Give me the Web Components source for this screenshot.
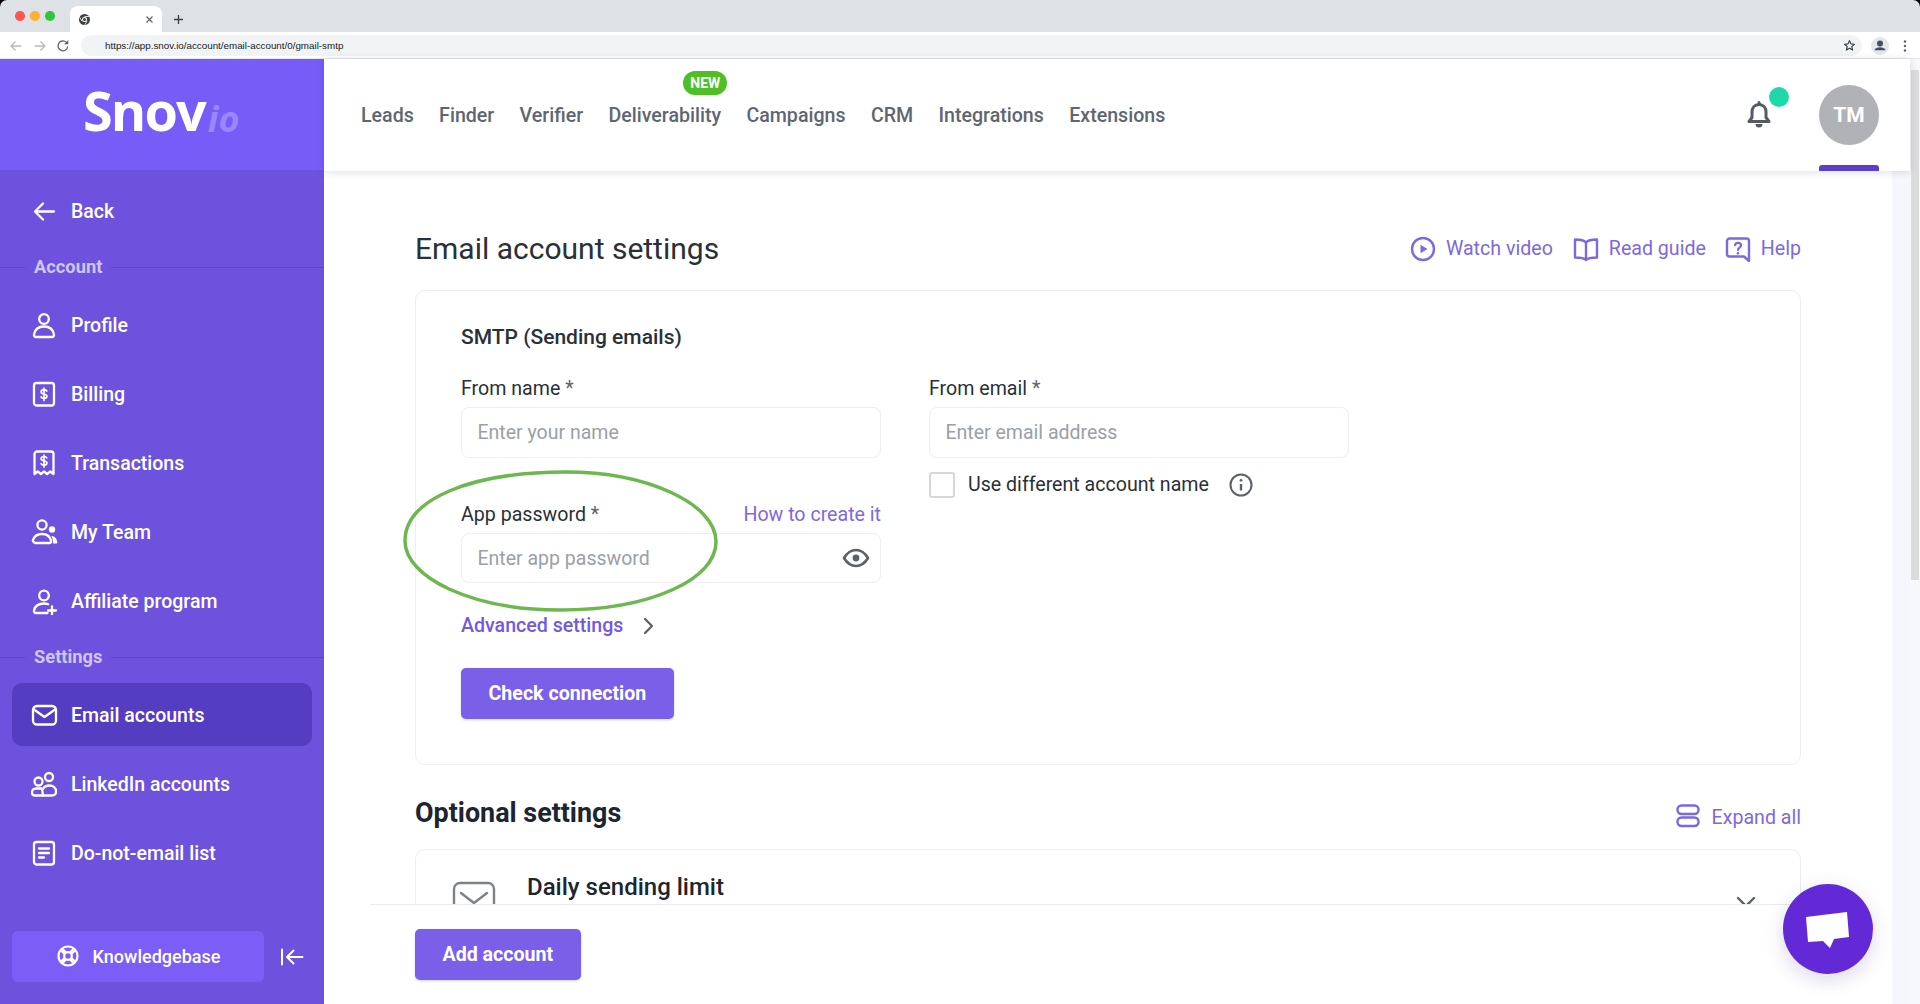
<!DOCTYPE html>
<html lang="en">
<head>
<meta charset="utf-8">
<title>Snov.io Email account settings</title>
<style>
html,body{margin:0;padding:0;height:1004px;overflow:hidden;background:#000;font-family:Roboto,"Liberation Sans",sans-serif;}
#page{display:flex;flex-direction:column;height:1004px;position:relative;}
#app{display:flex;flex:1;min-height:0;background:#fff;}
#col{flex:1;display:flex;flex-direction:column;min-width:0;}
#below{flex:1;display:flex;min-height:0;}
#main{width:1568px;display:flex;flex-direction:column;min-height:0;background:#fff;}
#gutter{flex:1;background:#f6f7fc;}
#scroll{flex:1;min-height:0;overflow:hidden;}
</style>
</head>
<body>
<div id="page">
  <browser-bar url="https://app.snov.io/account/email-account/0/gmail-smtp"></browser-bar>
  <div id="app">
    <snov-sidebar>
      <side-item icon="back">Back</side-item>
      <side-label>Account</side-label>
      <side-item icon="profile">Profile</side-item>
      <side-item icon="billing">Billing</side-item>
      <side-item icon="receipt">Transactions</side-item>
      <side-item icon="team">My Team</side-item>
      <side-item icon="affiliate">Affiliate program</side-item>
      <side-label>Settings</side-label>
      <side-item icon="mail" active>Email accounts</side-item>
      <side-item icon="linked">LinkedIn accounts</side-item>
      <side-item icon="doc">Do-not-email list</side-item>
    </snov-sidebar>
    <div id="col">
      <top-nav></top-nav>
      <div id="below">
        <div id="main">
          <div id="scroll">
            <settings-page></settings-page>
          </div>
          <page-footer></page-footer>
        </div>
        <div id="gutter"></div>
      </div>
    </div>
    <fake-scrollbar></fake-scrollbar>
  </div>
  <chat-bubble></chat-bubble>
</div>

<script>
const ICONS = {
  back:`<path d="M23 13.500H5M12 5.500l-8 8 8 8"/>`,
  profile:`<circle cx="13" cy="7" r="4.800"/><path d="M5 25h16a2 2 0 0 0 2-2.500C22 17.200 18 14.500 13 14.500S4 17.200 3 22.500A2 2 0 0 0 5 25z"/>`,
  billing:`<rect x="3" y="2" width="20" height="22.500" rx="2.500"/><path d="M15.800 10c-.5-.9-1.600-1.300-2.800-1.300-1.700 0-2.900.8-2.900 2.200 0 2.900 5.800 1.400 5.800 4.300 0 1.400-1.300 2.200-2.900 2.200-1.400 0-2.500-.5-3-1.500M13 7v12.500" stroke-width="1.700"/>`,
  receipt:`<path d="M3.500 24V4a2.500 2.500 0 0 1 2.500-2.500h14A2.500 2.500 0 0 1 22.500 4v20l-3.200-2.500-3.200 2.500-3.100-2.500-3.100 2.500-3.200-2.500z"/><path d="M15.800 7.800c-.5-.9-1.600-1.300-2.800-1.300-1.700 0-2.900.8-2.900 2.200 0 2.900 5.800 1.400 5.800 4.300 0 1.400-1.300 2.200-2.900 2.200-1.400 0-2.500-.5-3-1.500M13 5v12" stroke-width="1.700"/>`,
  team:`<circle cx="11" cy="6" r="4.600"/><path d="M4 24h14.500c1.500 0 2-1.200 1.500-2.500-1-4-4.500-6.500-9-6.500-4.500 0-8 2.500-9.200 6.500C2.300 22.800 2.800 24 4 24z"/><circle cx="21" cy="10.500" r="3.200" fill="currentColor" stroke="none"/><path d="M20.500 17c3 0 5.300 2.500 5.800 6.200 0 1-.5 1.300-1.300 1.300H22c.2-3-.5-5.500-1.500-7.500z" fill="currentColor" stroke="none"/>`,
  affiliate:`<circle cx="13" cy="7.500" r="4.800"/><path d="M16.500 25H5a2 2 0 0 1-2-2.500C4 18 8 15.500 13 15.500c1.500 0 2.900.2 4.200.7"/><path d="M21 18.500v8M17 22.500h8"/>`,
  mail:`<rect x="2" y="4" width="23" height="18.500" rx="4"/><path d="M3 7.500l10.500 7.500L24 7.500"/>`,
  linked:`<circle cx="7.500" cy="10.500" r="4"/><circle cx="18" cy="6" r="4"/><path d="M4 24.500h7.500c.5-3 .2-5-1-7H5c-3 0-4 2-4 4 0 2 1.300 3 3 3z"/><path d="M11.500 24.500H21c2.500 0 4-1.500 4-4 0-3.500-2.800-6-6.500-6-3 0-5.500 1.500-6.500 3.500"/>`,
  doc:`<rect x="3" y="2" width="20" height="22.500" rx="2.500"/><path d="M8 8.500h10M8 13h10M8 17.500h5"/>`
};

class AppIcon extends HTMLElement{
  connectedCallback(){
    const n=this.getAttribute('name');
    const s=this.attachShadow({mode:'open'});
    s.innerHTML=`<style>:host{display:inline-flex;width:27px;height:27px;flex:none}svg{width:100%;height:100%;display:block;fill:none;stroke:currentColor;stroke-width:2.300;stroke-linecap:round;stroke-linejoin:round}</style><svg viewBox="0 0 27 27">${ICONS[n]||''}</svg>`;
  }
}
customElements.define('app-icon',AppIcon);

class BrowserBar extends HTMLElement{
  connectedCallback(){
    const s=this.attachShadow({mode:'open'});
    s.innerHTML=`<style>
:host{display:block;background:#000;flex:none}
.strip{height:32px;background:#dee1e6;border-radius:7px 7px 0 0;display:flex;align-items:flex-end;padding-left:15px;box-sizing:border-box;overflow:hidden}
.lights{display:flex;gap:5.500px;align-self:flex-start;margin-top:11px;width:55px}
.lights i{width:9.500px;height:9.500px;border-radius:50%;display:block}
.tab{width:92px;height:26px;background:#fff;border-radius:8px 8px 0 0;display:flex;align-items:center;justify-content:space-between;padding:0 8px 0 8px;box-sizing:border-box}
.plus{margin:0 0 7px 11px}
.bar{height:26px;background:#fff;border-bottom:1px solid #e3e5e8;display:flex;align-items:center;box-sizing:content-box;padding-top:0}
.navs{display:flex;align-items:center;gap:8px;padding:1px 0 0 8px;width:81px;box-sizing:border-box}
.pill{width:1781px;height:21px;margin-top:1px;border-radius:11px;background:#f1f3f4;display:flex;align-items:center;justify-content:space-between;padding:0 6px 0 24px;box-sizing:border-box;font:9.800px "Liberation Sans",Arial,sans-serif;color:#202124;flex:none}
.right{display:flex;align-items:center;gap:14px;margin:1px 0 0 9px}
svg{display:block}
</style>
<div class="strip">
  <div class="lights"><i style="background:#fc5650"></i><i style="background:#fdb12c"></i><i style="background:#2ec53f"></i></div>
  <div class="tab">
    <svg width="13" height="13" viewBox="0 0 13 13"><circle cx="6.500" cy="6.500" r="5.500" fill="#3c4043"/><circle cx="6.500" cy="6.500" r="2.500" fill="#fff"/><circle cx="6.500" cy="6.500" r="1.500" fill="#3c4043"/><path d="M6.500 3.500H12M3.900 8L1.500 4M9 8l-2.500 4.500" stroke="#fff" stroke-width=".8"/></svg>
    <svg width="9" height="9" viewBox="0 0 9 9"><path d="M1.500 1.500l6 6M7.500 1.500l-6 6" stroke="#5f6368" stroke-width="1.200"/></svg>
  </div>
  <svg class="plus" width="11" height="11" viewBox="0 0 11 11"><path d="M5.500 1v9M1 5.500h9" stroke="#3c4043" stroke-width="1.300"/></svg>
</div>
<div class="bar">
  <div class="navs">
    <svg width="16" height="16" viewBox="0 0 16 16"><path d="M13.500 8H3M7.500 3.500L3 8l4.500 4.500" fill="none" stroke="#b7babd" stroke-width="1.300"/></svg>
    <svg width="16" height="16" viewBox="0 0 16 16"><path d="M2.500 8H13M8.500 3.500L13 8l-4.500 4.500" fill="none" stroke="#b7babd" stroke-width="1.300"/></svg>
    <svg width="14" height="14" viewBox="0 0 14 14"><path d="M11.800 7.500A4.900 4.900 0 1 1 10.400 3.400" fill="none" stroke="#5f6368" stroke-width="1.300"/><path d="M12.300 1v4.200H8.100z" fill="#5f6368"/></svg>
  </div>
  <div class="pill"><span>${this.getAttribute('url')}</span>
    <svg width="13" height="13" viewBox="0 0 24 24"><path d="M12 3l2.700 6 6.300.7-4.700 4.300 1.300 6.500L12 17.200l-5.600 3.300L7.700 14 3 9.700 9.300 9z" fill="none" stroke="#3c4043" stroke-width="2.200" stroke-linejoin="round"/></svg>
  </div>
  <div class="right">
    <svg width="18" height="18" viewBox="0 0 18 18"><circle cx="9" cy="9" r="9" fill="#e4e6e9"/><circle cx="9" cy="6.600" r="3" fill="#44505f"/><path d="M3.500 13.200c.8-2.200 3-3 5.500-3s4.700.8 5.500 3z" fill="#44505f"/></svg>
    <svg width="4" height="12" viewBox="0 0 4 12"><circle cx="2" cy="1.500" r="1.200" fill="#5f6368"/><circle cx="2" cy="6" r="1.200" fill="#5f6368"/><circle cx="2" cy="10.500" r="1.200" fill="#5f6368"/></svg>
  </div>
</div>`;
  }
}
customElements.define('browser-bar',BrowserBar);

class SnovSidebar extends HTMLElement{
  connectedCallback(){
    const s=this.attachShadow({mode:'open'});
    s.innerHTML=`<style>
:host{display:flex;flex-direction:column;width:324px;flex:none;background:#6c52dc;color:#fff;font-family:Roboto,sans-serif}
.logo{height:111px;background:#785cf8;display:flex;align-items:flex-start;padding-left:83px;box-sizing:border-box;flex:none;overflow:hidden}
.logo b{font:700 54px/103px "Open Sans",sans-serif;letter-spacing:-1.900px}
.logo i{font:italic 700 36px/103px "Open Sans",sans-serif;color:#9a87fb;margin:8px 0 0 3px}
nav{padding-top:6px;display:flex;flex-direction:column}
.foot{margin-top:auto;display:flex;align-items:center;padding:0 0 22px 12px;gap:16px}
.kb{width:252px;height:51px;background:#7a5ef5;border-radius:6px;display:flex;align-items:center;justify-content:center;gap:13px;font-weight:500;font-size:18px;box-sizing:border-box;padding-bottom:1px}
svg{display:block}
</style>
<div class="logo"><b>Snov</b><i>io</i></div>
<nav><slot></slot></nav>
<div class="foot">
  <div class="kb">
    <svg width="24" height="24" viewBox="0 0 24 24" fill="none" stroke="#fff"><circle cx="12" cy="12" r="9.500" stroke-width="2.200"/><circle cx="12" cy="12" r="3.800" stroke-width="2.200"/><path d="M5 5l4.300 4.300M19 5l-4.300 4.300M5 19l4.300-4.300M19 19l-4.300-4.300" stroke-width="4.200"/></svg>
    <span>Knowledgebase</span>
  </div>
  <svg width="24" height="20" viewBox="0 0 24 20" fill="none" stroke="#fff" stroke-width="2" stroke-linecap="round" stroke-linejoin="round"><path d="M2 2.500v15M22.500 10H7.500M13.500 3.500L7 10l6.500 6.500"/></svg>
</div>`;
  }
}
customElements.define('snov-sidebar',SnovSidebar);

class SideItem extends HTMLElement{
  connectedCallback(){
    const s=this.attachShadow({mode:'open'});
    const icon=this.getAttribute('icon');
    s.innerHTML=`<style>
:host{display:block;height:63px;margin:3px 12px;border-radius:10px;font-size:19.500px;font-weight:500;color:#fff}
:host([active]){background:#553dc2}
.r{display:flex;align-items:center;height:100%;padding:2px 0 0 19px;gap:13px;box-sizing:border-box}
</style><div class="r"><app-icon name="${icon}"></app-icon><slot></slot></div>`;
  }
}
customElements.define('side-item',SideItem);

class SideLabel extends HTMLElement{
  connectedCallback(){
    const s=this.attachShadow({mode:'open'});
    s.innerHTML=`<style>
:host{display:flex;align-items:center;height:45px;color:#cfc6f6;font-size:18.300px;font-weight:700}
i{height:1px;background:#5d45cb;display:block}
i.a{width:25px}i.b{flex:1}
span{padding:0 9px 2px}
</style><i class="a"></i><span><slot></slot></span><i class="b"></i>`;
  }
}
customElements.define('side-label',SideLabel);

class TopNav extends HTMLElement{
  connectedCallback(){
    const s=this.attachShadow({mode:'open'});
    const items=['Leads','Finder','Verifier','Deliverability','Campaigns','CRM','Integrations','Extensions'];
    s.innerHTML=`<style>
:host{display:flex;align-items:center;height:112px;flex:none;background:#fff;box-shadow:0 1px 8px rgba(40,50,70,.16);position:relative;z-index:2;padding:0 31px 0 37px;font-family:Roboto,sans-serif;box-sizing:border-box}
ul{list-style:none;margin:0;padding:0;display:flex;gap:25.350px;font-size:19.600px;font-weight:500;color:#5e6672}
li{position:relative}
.new{position:absolute;left:calc(50% + 40.500px);top:-33px;transform:translateX(-50%);width:44px;height:24px;border-radius:12px;background:#4fbf26;color:#fff;font-size:14px;font-weight:700;display:flex;align-items:center;justify-content:center}
.right{margin-left:auto;display:flex;align-items:center;height:100%;position:relative}
.bell{position:relative;margin-right:48px;width:24px;height:28px}
.dot{position:absolute;left:22px;top:-14px;width:20px;height:20px;border-radius:50%;background:#1fd8a8}
.ava{width:60px;height:60px;border-radius:50%;background:#b0b2b6;color:#fff;font-size:21px;font-weight:700;display:flex;align-items:center;justify-content:center}
.under{position:absolute;right:0;bottom:0;width:60px;height:6px;background:#5a3fc9;border-radius:3px 3px 0 0}
svg{display:block}
</style>
<ul>${items.map(t=>`<li>${t==='Deliverability'?'<span class="new">NEW</span>':''}${t}</li>`).join('')}</ul>
<div class="right">
  <div class="bell">
    <svg width="24" height="28" viewBox="0 0 24 28" fill="none" stroke="#555b63" stroke-width="3" stroke-linejoin="round"><path d="M12 3.500c-4.500 0-7 3.300-7 7.500v5.500l-3 4h20l-3-4V11c0-4.200-2.500-7.500-7-7.500z"/><path d="M12 1.500v2" stroke-linecap="round"/><path d="M8.500 23a3.500 3.500 0 0 0 7 0z" fill="#555b63" stroke="none"/></svg>
    <span class="dot"></span>
  </div>
  <div class="ava">TM</div>
  <div class="under"></div>
</div>`;
  }
}
customElements.define('top-nav',TopNav);

class TextField extends HTMLElement{
  connectedCallback(){
    const s=this.attachShadow({mode:'open'});
    s.innerHTML=`<style>
:host{display:flex;align-items:center;justify-content:space-between;height:51px;border:1.500px solid #eceef1;border-radius:8px;padding:0 10px 0 15.500px;box-sizing:border-box;color:#9aa0a8;font-size:19.500px;background:#fff}
:host(.pwf){padding-top:1.500px}
</style><span>${this.getAttribute('placeholder')}</span><slot></slot>`;
  }
}
customElements.define('text-field',TextField);

class LinkIcon extends HTMLElement{
  connectedCallback(){
    const s=this.attachShadow({mode:'open'});
    const paths={
      play:'<circle cx="13" cy="13" r="11" stroke-width="2.400"/><path d="M10.500 8.800l7 4.200-7 4.200z" fill="currentColor" stroke="none"/>',
      book:'<path d="M13 6.500C11.500 4.500 9 3.500 2 3.500v18c7 0 9.500.7 11 2.500 1.500-1.800 4-2.500 11-2.500v-18c-7 0-9.500 1-11 3zM13 6.500V24" stroke-width="2.400"/>',
      help:'<path d="M4.500 2.500h17a2.500 2.500 0 0 1 2.500 2.500v20l-5-4.500H4.500A2.500 2.500 0 0 1 2 18V5a2.500 2.500 0 0 1 2.500-2.500z" stroke-width="2.400"/><path d="M10 9.200c.3-1.500 1.500-2.300 3-2.300 1.700 0 3 1 3 2.500 0 2.200-3 2.300-3 4.600" stroke-width="2.200"/><circle cx="13" cy="17.200" r="1.300" fill="currentColor" stroke="none"/>',
      expand:'<rect x="1.500" y="1.500" width="21" height="8.500" rx="4" stroke-width="2.400"/><rect x="1.500" y="13.500" width="21" height="8.500" rx="4" stroke-width="2.400"/>'
    };
    const w=this.getAttribute('icon')==='expand'?24:26;
    s.innerHTML=`<style>
:host{display:inline-flex;align-items:center;color:#7e68de;font-size:19.600px;gap:var(--g,10px)}
svg{display:block;fill:none;stroke:currentColor;stroke-linecap:round;stroke-linejoin:round;flex:none}
</style><svg width="${w}" height="26" viewBox="0 0 ${w} 26">${paths[this.getAttribute('icon')]}</svg><slot></slot>`;
  }
}
customElements.define('link-icon',LinkIcon);

class SettingsPage extends HTMLElement{
  connectedCallback(){
    const s=this.attachShadow({mode:'open'});
    s.innerHTML=`<style>
:host{display:block;padding:60px 91px 0;font-family:Roboto,sans-serif;color:#2a3038;font-size:19.600px}
.head{display:flex;justify-content:space-between;align-items:center;height:35px}
h1{font-size:30px;font-weight:400;margin:0;color:#2a3038}
.links{display:flex;gap:20px;align-items:center}
.links link-icon:last-child{margin-left:-1px}
.card{border:1.500px solid #eceef1;border-radius:10px;box-sizing:border-box;background:#fff}
.smtp{margin-top:24px;height:475px;padding:33.500px 45px 0;position:relative}
h2{font-size:21px;font-weight:500;margin:0;line-height:24px;color:#2a3038}
.grid{display:grid;grid-template-columns:420px 420px;column-gap:48px;margin-top:27px}
.col{display:flex;flex-direction:column}
.lab{display:flex;justify-content:space-between;height:24px;line-height:24px;margin-bottom:7px;padding-top:1px;box-sizing:border-box}
.lab span.s{color:#5c636b}
.pw{margin-top:44px}
.pwf{height:50px}
.adv{display:flex;align-items:center;margin-top:31px;height:24px;color:#7259e0;font-weight:500;gap:19px}
.btn{margin-top:30px;align-self:flex-start}
.chk{display:flex;align-items:center;margin-top:14px;height:26px}
.box{width:26px;height:26px;border:2px solid #d5d7da;border-radius:3px;box-sizing:border-box;margin-right:13px}
.chk svg{margin-left:20px}
.ell{position:absolute;top:178px;left:-15px;pointer-events:none}
.opt{display:flex;justify-content:space-between;align-items:center;margin-top:32px;height:32px}
.opt h3{font-size:26.900px;font-weight:700;margin:0;color:#1c2530}
.opt link-icon{--g:12px;position:relative;top:4px}
.daily{margin-top:20px;height:120px;display:flex;padding:23px 6px 0 36px;align-items:flex-start}
.daily .t{font-size:24px;font-weight:500;line-height:29px;color:#1c2530;margin-left:31px;flex:1}
.daily .ic{margin-top:7.500px}
.daily .cv{margin-top:23px;margin-right:38px}
a{color:#7e68de;text-decoration:none}
svg{display:block}
</style>
<div class="head"><h1>Email account settings</h1>
  <div class="links"><link-icon icon="play">Watch video</link-icon><link-icon icon="book">Read guide</link-icon><link-icon icon="help">Help</link-icon></div>
</div>
<div class="card smtp">
  <h2>SMTP (Sending emails)</h2>
  <div class="grid">
    <div class="col">
      <div class="lab"><span>From name <span class="s">*</span></span></div>
      <text-field placeholder="Enter your name"></text-field>
      <div class="lab pw"><span>App password <span class="s">*</span></span><a>How to create it</a></div>
      <text-field class="pwf" placeholder="Enter app password">
        <svg width="28" height="20" viewBox="0 0 28 20" fill="none" stroke="#5b6168" stroke-width="2.600"><path d="M2 10c3-5 7-8 12-8s9 3 12 8c-3 5-7 8-12 8S5 15 2 10z" stroke-linejoin="round"/><circle cx="14" cy="10" r="3.400" fill="#5b6168" stroke="none"/></svg>
      </text-field>
      <div class="adv"><span>Advanced settings</span>
        <svg width="12" height="18" viewBox="0 0 12 18" fill="none" stroke="#5b6168" stroke-width="2.200" stroke-linecap="round" stroke-linejoin="round"><path d="M3 2l7 7-7 7"/></svg>
      </div>
      <action-button class="btn">Check connection</action-button>
    </div>
    <div class="col">
      <div class="lab"><span>From email <span class="s">*</span></span></div>
      <text-field placeholder="Enter email address"></text-field>
      <div class="chk"><span class="box"></span><span>Use different account name</span>
        <svg width="24" height="24" viewBox="0 0 24 24" fill="none" stroke="#5b6168" stroke-width="2"><circle cx="12" cy="12" r="10.500"/><path d="M12 11v6.500" stroke-width="2.400"/><circle cx="12" cy="7.300" r="1.400" fill="#5b6168" stroke="none"/></svg>
      </div>
    </div>
  </div>
  <svg class="ell" width="318" height="144" viewBox="0 0 318 144" fill="none"><path d="M4 72C4 30 70 3 165 3c80 0 149 31 150 69 1 38-65 69-156 69C70 141 4 108 4 72z" stroke="#6cb84e" stroke-width="3.500"/></svg>
</div>
<div class="opt"><h3>Optional settings</h3><link-icon icon="expand">Expand all</link-icon></div>
<div class="card daily">
  <svg class="ic" width="44" height="44" viewBox="0 0 44 44" fill="none" stroke="#7c8187" stroke-width="2.400" stroke-linecap="round" stroke-linejoin="round"><rect x="2" y="2" width="40" height="34" rx="6"/><path d="M9 12l13 10 13-10"/><circle cx="36" cy="34" r="9" fill="#fff"/></svg>
  <div class="t">Daily sending limit</div>
  <svg class="cv" width="20" height="12" viewBox="0 0 20 12" fill="none" stroke="#5b6168" stroke-width="2.400" stroke-linecap="round" stroke-linejoin="round"><path d="M2 2l8 8 8-8"/></svg>
</div>`;
  }
}
customElements.define('settings-page',SettingsPage);

class ActionButton extends HTMLElement{
  connectedCallback(){
    const s=this.attachShadow({mode:'open'});
    s.innerHTML=`<style>
:host{display:inline-flex;align-items:center;height:51px;padding:0 27.500px;background:#7a5fe8;color:#fff;border-radius:5px;font-size:19.600px;font-weight:700;font-family:Roboto,sans-serif;box-shadow:0 1px 3px rgba(90,70,200,.25)}
</style><slot></slot>`;
  }
}
customElements.define('action-button',ActionButton);

class PageFooter extends HTMLElement{
  connectedCallback(){
    const s=this.attachShadow({mode:'open'});
    s.innerHTML=`<style>
:host{display:block;flex:none;height:100px;margin:0 46px;border-top:1px solid #e9ebee;padding:24px 0 0 45px;box-sizing:border-box;background:#fff}
</style><action-button>Add account</action-button>`;
  }
}
customElements.define('page-footer',PageFooter);

class FakeScrollbar extends HTMLElement{
  connectedCallback(){
    const s=this.attachShadow({mode:'open'});
    s.innerHTML=`<style>
:host{display:block;width:10px;flex:none;background:#f7f8fc;padding:11px 1px 0;box-sizing:border-box}
i{display:block;height:510px;background:#dcdcdc;border-radius:1px}
</style><i></i>`;
  }
}
customElements.define('fake-scrollbar',FakeScrollbar);

class ChatBubble extends HTMLElement{
  connectedCallback(){
    const s=this.attachShadow({mode:'open'});
    s.innerHTML=`<style>
:host{position:absolute;left:1783px;top:884px;width:90px;height:90px;border-radius:50%;background:#6329d6;box-shadow:0 6px 20px rgba(60,40,120,.18)}
svg{display:block}
</style><svg width="90" height="90" viewBox="0 0 90 90"><path d="M23 33l41-5 2 25-15 2-4 9-7-7-15 1z" fill="#fff"/></svg>`;
  }
}
customElements.define('chat-bubble',ChatBubble);
</script>
</body>
</html>
